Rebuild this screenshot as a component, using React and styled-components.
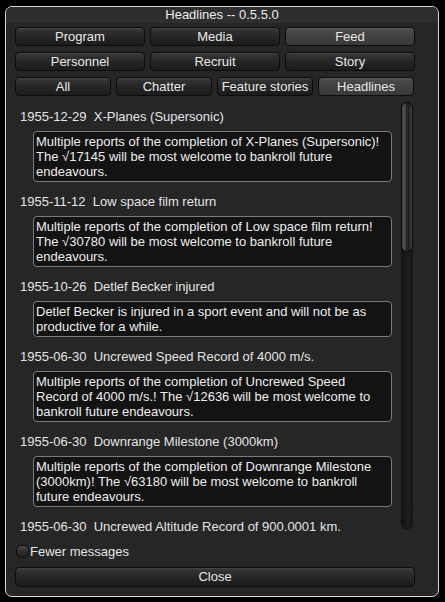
import React from "react";
import styled, { createGlobalStyle, css } from "styled-components";

const Global = createGlobalStyle`
  html, body { margin: 0; padding: 0; background: #000; }
  body { font-family: "Liberation Sans", Arial, sans-serif; }
`;

const Window = styled.div`
  box-sizing: border-box;
  margin: 6px 6px 0 5px;
  width: 434px;
  height: 591px;
  border: 1px solid #d8d8d8;
  border-radius: 7px;
  background: #262627;
  display: flex;
  flex-direction: column;
  overflow: hidden;
  color: #e6e6e6;
  font-size: 13px;
`;

const TitleBar = styled.div`
  height: 16px;
  line-height: 16px;
  text-align: center;
  background: #2e2e2f;
  color: #ececec;
  font-size: 13px;
`;

const ButtonGrid = styled.div`
  display: flex;
  flex-direction: column;
  gap: 6px;
  padding: 4px 0 0 9px;
`;

const ButtonRow = styled.div`
  display: grid;
  grid-template-columns: repeat(${(p) => p.$cols}, 1fr);
  gap: 5px;
  width: ${(p) => p.$width}px;
`;

const btnBase = css`
  box-sizing: border-box;
  height: 19px;
  border: 1px solid #0c0c0c;
  border-radius: 4px;
  color: #e8e8e8;
  font-family: "Liberation Sans", Arial, sans-serif;
  font-size: 13px;
  line-height: 17px;
  padding: 0;
  text-align: center;
  white-space: nowrap;
`;

const Button = styled.div`
  ${btnBase}
  background: ${(p) =>
    p.$active
      ? "linear-gradient(#5e5e5e 0px, #4a4a4a 2px, #414141 50%, #393939 100%)"
      : "linear-gradient(#474747 0px, #333 2px, #262626 50%, #1c1c1c 100%)"};
`;

const Middle = styled.div`
  flex: 1;
  display: flex;
  min-height: 0;
  margin-bottom: 6px;
  overflow: hidden;
`;

const List = styled.div`
  flex: 1;
  overflow: hidden;
  padding: 1px 0 0 14px;
`;

const Entry = styled.div`
  display: flex;
  flex-direction: column;
`;

const EntryTitle = styled.div`
  margin-top: 12px;
  line-height: 16px;
  height: 16px;
  white-space: pre;
  color: #e4e4e4;
`;

const MessageBox = styled.div`
  box-sizing: border-box;
  margin: 6px 0 0 13px;
  width: 359px;
  padding: 2px 3px 2px 2px;
  border: 1px solid #7c7c7c;
  border-radius: 4px;
  background: #131313;
  line-height: 15px;
  color: #ededed;
`;

const ScrollTrack = styled.div`
  position: relative;
  box-sizing: border-box;
  margin: 6px 25px 0 8px;
  width: 12px;
  height: 428px;
  flex-shrink: 0;
  border-radius: 6px;
  background: linear-gradient(90deg, #121212, #1d1d1d 50%, #151515);
`;

const ScrollThumb = styled.div`
  position: absolute;
  left: 0;
  top: 0;
  width: 12px;
  height: 150px;
  box-sizing: border-box;
  border-radius: 6px;
  border: 1px solid #0a0a0a;
  background: linear-gradient(90deg, #3a3a3a, #555 20%, #2a2a2a 45%, #1e1e1e 70%, #444 100%);
`;

const Footer = styled.div`
  display: flex;
  flex-direction: column;
  padding: 0 0 9px 9px;
`;

const CheckRow = styled.label`
  display: flex;
  align-items: center;
  height: 16px;
  margin-left: 1px;
  margin-bottom: 8px;
  color: #e4e4e4;
`;

const CheckBox = styled.span`
  box-sizing: border-box;
  width: 13px;
  height: 13px;
  border-radius: 5px;
  border: 1px solid #0c0c0c;
  background: linear-gradient(#4a4a4a, #2e2e2e 50%, #1e1e1e);
  margin-right: 1px;
`;

const CloseButton = styled.div`
  ${btnBase}
  height: 20px;
  line-height: 18px;
  width: 400px;
  background: linear-gradient(#474747 0px, #333 2px, #262626 50%, #1c1c1c 100%);
`;

const entries = [
  {
    date: "1955-12-29",
    title: "X-Planes (Supersonic)",
    text: "Multiple reports of the completion of X-Planes (Supersonic)! The \u221A17145 will be most welcome to bankroll future endeavours.",
  },
  {
    date: "1955-11-12",
    title: "Low space film return",
    text: "Multiple reports of the completion of Low space film return! The \u221A30780 will be most welcome to bankroll future endeavours.",
  },
  {
    date: "1955-10-26",
    title: "Detlef Becker injured",
    text: "Detlef Becker is injured in a sport event and will not be as productive for a while.",
  },
  {
    date: "1955-06-30",
    title: "Uncrewed Speed Record of 4000 m/s.",
    text: "Multiple reports of the completion of Uncrewed Speed Record of 4000 m/s.! The \u221A12636 will be most welcome to bankroll future endeavours.",
  },
  {
    date: "1955-06-30",
    title: "Downrange Milestone (3000km)",
    text: "Multiple reports of the completion of Downrange Milestone (3000km)! The \u221A63180 will be most welcome to bankroll future endeavours.",
  },
  {
    date: "1955-06-30",
    title: "Uncrewed Altitude Record of 900.0001 km.",
    text: "Multiple reports of the completion of Uncrewed Altitude Record of 900.0001 km.! The \u221A8000 will be most welcome to bankroll future endeavours.",
  },
];

export default function App() {
  return (
    <>
      <Global />
      <Window>
        <TitleBar>Headlines -- 0.5.5.0</TitleBar>
        <ButtonGrid>
          <ButtonRow $cols={3} $width={400}>
            <Button>Program</Button>
            <Button>Media</Button>
            <Button $active>Feed</Button>
          </ButtonRow>
          <ButtonRow $cols={3} $width={400}>
            <Button>Personnel</Button>
            <Button>Recruit</Button>
            <Button>Story</Button>
          </ButtonRow>
          <ButtonRow $cols={4} $width={399}>
            <Button>All</Button>
            <Button>Chatter</Button>
            <Button>Feature stories</Button>
            <Button $active>Headlines</Button>
          </ButtonRow>
        </ButtonGrid>
        <Middle>
          <List>
            {entries.map((e, i) => (
              <Entry key={i}>
                <EntryTitle>{`${e.date}  ${e.title}`}</EntryTitle>
                <MessageBox>{e.text}</MessageBox>
              </Entry>
            ))}
          </List>
          <ScrollTrack>
            <ScrollThumb />
          </ScrollTrack>
        </Middle>
        <Footer>
          <CheckRow>
            <CheckBox />
            Fewer messages
          </CheckRow>
          <CloseButton>Close</CloseButton>
        </Footer>
      </Window>
    </>
  );
}
